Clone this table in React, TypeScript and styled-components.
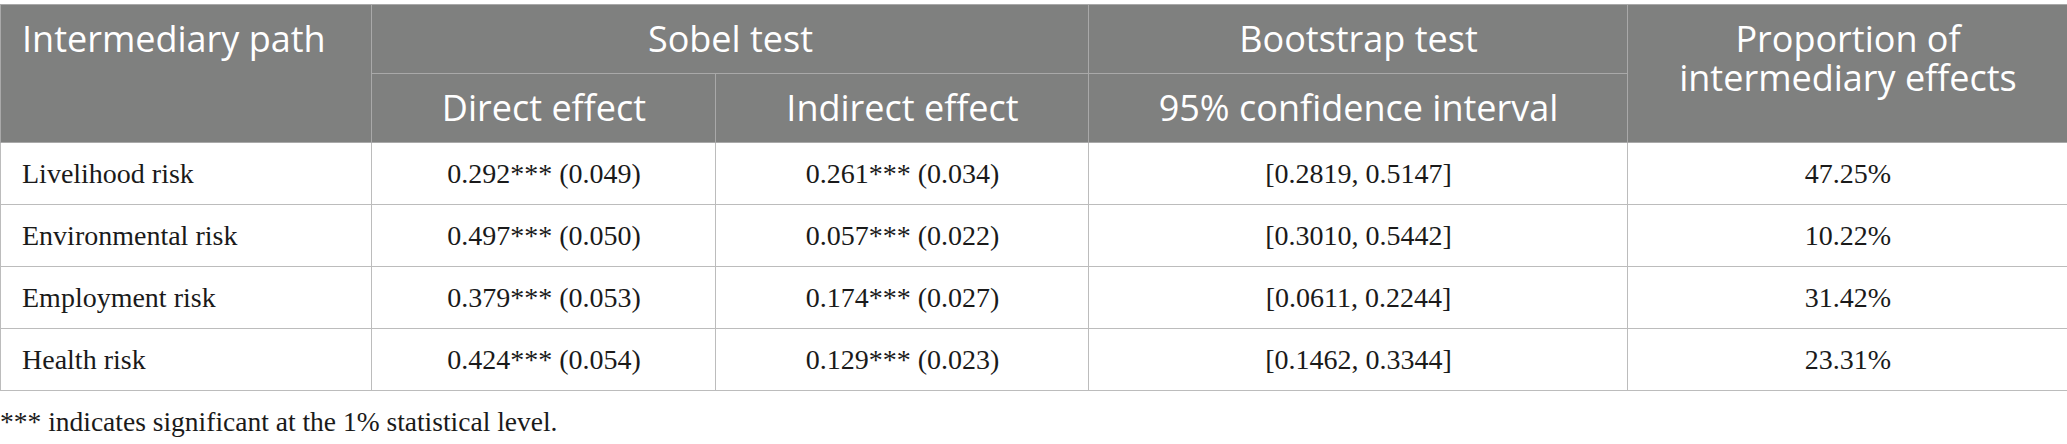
import React from "react";
import styled, { createGlobalStyle } from "styled-components";

const GlobalStyle = createGlobalStyle`
  html, body {
    margin: 0;
    padding: 0;
    background: #ffffff;
  }
`;

const Page = styled.div`
  padding-top: 4px;
  width: 2067px;
`;

const Table = styled.table`
  width: 2067px;
  border-collapse: collapse;
  table-layout: fixed;
`;

const HeadCell = styled.th<{ $align?: "left" | "center" }>`
  background: #7f807f;
  color: #ffffff;
  font-family: "Open Sans", Lato, sans-serif;
  font-weight: 400;
  font-size: 36px;
  line-height: 39px;
  text-align: ${(p) => p.$align ?? "center"};
  vertical-align: top;
  padding: 14px 20px 15px 21px;
  border: 1px solid #a9a9a9;
`;

const HeadLine = styled.span`
  display: block;
  height: 39px;
`;

const BodyCell = styled.td<{ $align?: "left" | "center" }>`
  font-family: "Liberation Serif", "Times New Roman", serif;
  font-size: 28px;
  line-height: 34px;
  color: #1a1a1a;
  text-align: ${(p) => p.$align ?? "center"};
  vertical-align: top;
  padding: 14px 20px 13px 21px;
  border: 1px solid #bcbcbc;
`;

const Footnote = styled.p`
  margin: 16px 0 0 0;
  font-family: "Liberation Serif", "Times New Roman", serif;
  font-size: 27.5px;
  line-height: 30px;
  color: #1a1a1a;
`;

type Row = {
  path: string;
  direct: string;
  indirect: string;
  ci: string;
  prop: string;
};

const rows: Row[] = [
  {
    path: "Livelihood risk",
    direct: "0.292*** (0.049)",
    indirect: "0.261*** (0.034)",
    ci: "[0.2819, 0.5147]",
    prop: "47.25%",
  },
  {
    path: "Environmental risk",
    direct: "0.497*** (0.050)",
    indirect: "0.057*** (0.022)",
    ci: "[0.3010, 0.5442]",
    prop: "10.22%",
  },
  {
    path: "Employment risk",
    direct: "0.379*** (0.053)",
    indirect: "0.174*** (0.027)",
    ci: "[0.0611, 0.2244]",
    prop: "31.42%",
  },
  {
    path: "Health risk",
    direct: "0.424*** (0.054)",
    indirect: "0.129*** (0.023)",
    ci: "[0.1462, 0.3344]",
    prop: "23.31%",
  },
];

export default function App() {
  return (
    <Page>
      <GlobalStyle />
      <Table>
        <colgroup>
          <col style={{ width: 371 }} />
          <col style={{ width: 344 }} />
          <col style={{ width: 373 }} />
          <col style={{ width: 539 }} />
          <col style={{ width: 440 }} />
        </colgroup>
        <thead>
          <tr>
            <HeadCell rowSpan={2} $align="left">
              Intermediary path
            </HeadCell>
            <HeadCell colSpan={2}>Sobel test</HeadCell>
            <HeadCell>Bootstrap test</HeadCell>
            <HeadCell rowSpan={2}>
              <HeadLine>Proportion of</HeadLine>
              <HeadLine>intermediary effects</HeadLine>
            </HeadCell>
          </tr>
          <tr>
            <HeadCell>Direct effect</HeadCell>
            <HeadCell>Indirect effect</HeadCell>
            <HeadCell>95% confidence interval</HeadCell>
          </tr>
        </thead>
        <tbody>
          {rows.map((r) => (
            <tr key={r.path}>
              <BodyCell $align="left">{r.path}</BodyCell>
              <BodyCell>{r.direct}</BodyCell>
              <BodyCell>{r.indirect}</BodyCell>
              <BodyCell>{r.ci}</BodyCell>
              <BodyCell>{r.prop}</BodyCell>
            </tr>
          ))}
        </tbody>
      </Table>
      <Footnote>*** indicates significant at the 1% statistical level.</Footnote>
    </Page>
  );
}
